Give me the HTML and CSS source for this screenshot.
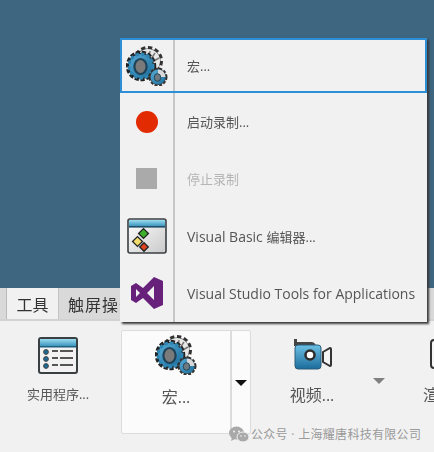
FILE: index.html
```html
<!DOCTYPE html>
<html lang="zh">
<head>
  <meta charset="UTF-8">
  <title>工具</title>
  <link rel="stylesheet" href="styles.css">
</head>
<body>
  <svg class="defs" width="0" height="0">
    <defs>
      <linearGradient id="blueGear" x1="0" y1="0" x2="1" y2="1">
        <stop offset="0" stop-color="#58aed8"/>
        <stop offset="1" stop-color="#1a6a98"/>
      </linearGradient>
      <linearGradient id="winBar" x1="0" y1="0" x2="0" y2="1">
        <stop offset="0" stop-color="#9bdcf0"/>
        <stop offset="1" stop-color="#2f8bb5"/>
      </linearGradient>
      <linearGradient id="camBody" x1="0" y1="0" x2="0" y2="1">
        <stop offset="0" stop-color="#6cc0e4"/>
        <stop offset="1" stop-color="#1c6c9c"/>
      </linearGradient>
      <linearGradient id="paper" x1="0" y1="0" x2="1" y2="1">
        <stop offset="0" stop-color="#ffffff"/>
        <stop offset="1" stop-color="#c9c9c9"/>
      </linearGradient>
      <symbol id="gears" viewBox="0 0 42 40">
        <!-- white gear behind -->
        <circle cx="22" cy="15" r="12.500" fill="#444" stroke="#333" stroke-width="5" stroke-dasharray="4 2.500"/>
        <circle cx="22" cy="15" r="12" fill="#e8e8e8"/>
        <path d="M24 5l-1 7M29 7l-4 6M33 12l-7 4" stroke="#777" stroke-width="1.500"/>
        <!-- big blue gear -->
        <circle cx="15" cy="20" r="13" fill="#222" stroke="#222" stroke-width="4.500" stroke-dasharray="4 1.600"/>
        <circle cx="15" cy="20" r="12" fill="url(#blueGear)" stroke="#2f86b4" stroke-width="3" stroke-dasharray="3.600 2"/>
        <ellipse cx="14.500" cy="20.500" rx="7.200" ry="8.600" fill="#1e4258"/>
        <ellipse cx="14.500" cy="20.500" rx="5" ry="6.400" fill="#7a7a7a"/>
        <!-- small gear -->
        <circle cx="32" cy="31" r="8" fill="#333" stroke="#333" stroke-width="3" stroke-dasharray="2.800 1.500"/>
        <circle cx="32" cy="31" r="7.500" fill="url(#blueGear)"/>
        <path d="M32 31V23.500A7.500 7.500 0 0 1 39.500 31Z" fill="#d8d8d8"/>
        <ellipse cx="31.500" cy="31.500" rx="3.200" ry="3.800" fill="#6f7a80" stroke="#24485c"/>
      </symbol>
    </defs>
  </svg>

  <div class="desktop"></div>

  <nav class="tabs">
    <span class="tab tab-edge"></span>
    <span class="tab tab-on">工具</span>
    <span class="tab tab-off">触屏操作</span>
  </nav>

  <section class="ribbon">
    <div class="tool tool-util">
      <svg class="tool-icon" width="40" height="37" viewBox="0 0 40 37">
        <rect x="1" y="1" width="38" height="35" rx="2" fill="#f2f2f2" stroke="#3a3f42" stroke-width="2"/>
        <rect x="2" y="2" width="36" height="8" fill="url(#winBar)"/>
        <rect x="2" y="9" width="36" height="1.500" fill="#1f5f80"/>
        <g fill="#1d6a94" stroke="#444"><circle cx="8" cy="15" r="2.400"/><circle cx="8" cy="22" r="2.400"/><circle cx="8" cy="29" r="2.400"/></g>
        <g stroke="#555" stroke-width="2"><path d="M14 14h6M22 14h13M14 21h6M22 21h13M14 28h6M22 28h13"/></g>
      </svg>
      <span class="tool-label">实用程序...</span>
    </div>

    <div class="split">
      <div class="split-main">
        <svg class="split-icon" width="42" height="40"><use href="#gears"/></svg>
        <span class="split-label">宏...</span>
      </div>
      <div class="split-drop"><span class="caret"></span></div>
    </div>

    <div class="tool tool-video">
      <svg class="tool-icon" width="40" height="32" viewBox="0 0 40 32">
        <path d="M2 1h3v3h14q4 0 5 4H2z" fill="#444"/>
        <rect x="3" y="7" width="26" height="24" rx="3" fill="url(#camBody)" stroke="#2b5a78"/>
        <circle cx="18" cy="17" r="4.500" fill="#fff" stroke="#2c2c2c" stroke-width="2.500"/>
        <path d="M31 14l7-4q1 0 1 1v16q0 1-1 1l-7-4z" fill="#f4f4f4" stroke="#333" stroke-width="2"/>
      </svg>
      <span class="tool-label tool-label-big">视频...</span>
    </div>
    <span class="caret caret-gray"></span>

    <div class="tool tool-cut">
      <svg class="tool-icon" width="20" height="32" viewBox="0 0 20 32">
        <path d="M5 2h15v28H5q-3 0-3-3V5q0-3 3-3z" fill="#f5f5f5" stroke="#333" stroke-width="2"/>
      </svg>
      <span class="tool-label tool-label-big">渲</span>
    </div>
  </section>

  <footer class="mark">
    <svg width="20" height="17" viewBox="0 0 20 17">
      <ellipse cx="7.500" cy="7" rx="7.500" ry="6.400" fill="#a9a9a9"/>
      <path d="M3 11l-1 4 4-2z" fill="#a9a9a9"/>
      <ellipse cx="14" cy="11" rx="6" ry="5" fill="#a9a9a9" stroke="#f1f1f1"/>
      <g fill="#f1f1f1"><circle cx="5" cy="5.500" r="1"/><circle cx="10" cy="5.500" r="1"/><circle cx="12" cy="10" r=".8"/><circle cx="16" cy="10" r=".8"/></g>
    </svg>
    <span>公众号 · 上海耀唐科技有限公司</span>
  </footer>

  <ul class="menu">
    <li class="menu-row menu-row-on">
      <span class="menu-icon"><svg width="42" height="40"><use href="#gears"/></svg></span>
      <span class="menu-text">宏...</span>
    </li>
    <li class="menu-row">
      <span class="menu-icon"><span class="rec"></span></span>
      <span class="menu-text">启动录制...</span>
    </li>
    <li class="menu-row">
      <span class="menu-icon"><span class="stop"></span></span>
      <span class="menu-text menu-text-off">停止录制</span>
    </li>
    <li class="menu-row">
      <span class="menu-icon">
        <svg width="40" height="36" viewBox="0 0 40 36">
          <rect x="1" y="1" width="38" height="34" rx="2" fill="url(#paper)" stroke="#3a3f42" stroke-width="1.600"/>
          <rect x="2" y="2" width="36" height="7" fill="url(#winBar)"/>
          <rect x="2" y="8" width="36" height="1.600" fill="#1f4f6a"/>
          <rect x="13" y="12" width="7" height="7" transform="rotate(45 16.500 15.500)" fill="#3fae2a" stroke="#222" stroke-width="1.300"/>
          <rect x="7" y="20" width="7" height="7" transform="rotate(45 10.500 23.500)" fill="#f3dc6c" stroke="#222" stroke-width="1.300"/>
          <rect x="14" y="26" width="6" height="6" transform="rotate(45 17 29)" fill="#e2441f" stroke="#222" stroke-width="1.300"/>
        </svg>
      </span>
      <span class="menu-text menu-text-en">Visual Basic <span class="menu-text-cn">编辑器...</span></span>
    </li>
    <li class="menu-row">
      <span class="menu-icon">
        <svg width="34" height="34" viewBox="0 0 34 34">
          <path fill-rule="evenodd" fill="#68217a" d="M24 1l9 4v24l-9 4-11-11-7 5-5-3V10l5-3 7 5zM24 10l-7 7 7 7zM6 13v8l4-4z"/>
        </svg>
      </span>
      <span class="menu-text menu-text-en">Visual Studio Tools for Applications</span>
    </li>
  </ul>
</body>
</html>
```

FILE: styles.css
```css
* { margin: 0; padding: 0; box-sizing: border-box; }
html, body { height: 100%; }
body {
  width: 434px;
  height: 452px;
  overflow: hidden;
  display: flex;
  flex-direction: column;
  position: relative;
  background: #f1f1f1;
  font-family: "Open Sans", "Noto Sans CJK SC", sans-serif;
  color: #444;
}
.defs { position: absolute; }
.tool-label, .split-label, .menu-text, .tab, .tool-icon, .split-icon, .menu-icon svg { filter: blur(0.5px); }

.desktop { height: 288px; background: #3e6680; flex: none; }

/* tabs */
.tabs {
  height: 33px;
  flex: none;
  display: flex;
  background: #d9d9d9;
  border-bottom: 2px solid #d2d2d2;
  font-size: 16px;
  color: #333;
  overflow: hidden;
}
.tab { display: flex; align-items: center; justify-content: center; white-space: nowrap; }
.tab-edge { width: 7px; border-right: 1px solid #bbb; }
.tab-on { width: 52px; background: #f1f1f1; border-right: 1px solid #c4c4c4; }
.tab-off { padding-left: 9px; justify-content: flex-start; letter-spacing: 1px; }

/* ribbon */
.ribbon { flex: 1; display: flex; align-items: flex-start; min-height: 0; overflow: hidden; }
.tool { display: flex; flex-direction: column; align-items: center; flex: none; }
.tool-label { font-size: 13px; color: #555; white-space: nowrap; }
.tool-label-big { font-size: 16px; }
.tool-util { width: 116px; padding: 16px 0 0 0; margin-right: 5px; }
.tool-util .tool-label { margin-top: 10px; }
.tool-video { width: 46px; margin-left: 38px; padding-top: 17px; }
.tool-video .tool-label { margin-top: 12px; }
.tool-cut { width: 11px; margin-left: 38px; padding-top: 17px; overflow: hidden; }
.tool-cut .tool-label { margin-top: 12px; align-self: flex-start; }
.tool-cut .tool-icon { align-self: flex-start; margin-left: 6px; }

.split {
  width: 130px;
  height: 104px;
  margin-top: 9px;
  display: flex;
  background: #fbfbfb;
  border: 1px solid #dcdcdc;
  border-radius: 2px;
  flex: none;
}
.split-main {
  width: 110px;
  border-right: 2px solid #dcdcdc;
  display: flex;
  flex-direction: column;
  align-items: center;
  padding-top: 4px;
}
.split-label { font-size: 16px; margin-top: 9px; color: #555; }
.split-drop { flex: 1; display: flex; justify-content: center; padding-top: 49px; }

.caret {
  width: 0;
  height: 0;
  border-left: 6px solid transparent;
  border-right: 6px solid transparent;
  border-top: 6px solid #111;
}
.caret-gray { border-top-color: #808080; margin: 57px 0 0 38px; flex: none; }

/* watermark */
.mark {
  position: absolute;
  left: 229px;
  top: 425px;
  display: flex;
  align-items: center;
  gap: 2px;
  font-size: 12px;
  letter-spacing: 0.3px;
  color: #9a9a9a;
  white-space: nowrap;
}

/* popup menu */
.menu {
  position: absolute;
  left: 120px;
  top: 38px;
  width: 307px;
  height: 284px;
  list-style: none;
  background: #f1f1f1;
  box-shadow: 2px 2px 2px #3a3a3a;
  display: flex;
  flex-direction: column;
}
.menu-row { flex: 1; display: flex; align-items: center; min-height: 0; }
.menu-row-on { outline: 2px solid #2f8fd6; outline-offset: -2px; flex: none; height: 55px; }
.menu-icon {
  width: 55px;
  height: 100%;
  flex: none;
  display: flex;
  align-items: center;
  justify-content: center;
  border-right: 2px solid #c6c6c6;
}
.menu-text { margin-left: 12px; font-size: 13px; color: #555; white-space: nowrap; }
.menu-text-en { font-size: 14px; }
.menu-text-cn { font-size: 13px; }
.menu-text-off { color: #b5b5b5; }
.rec { width: 22px; height: 22px; border-radius: 50%; background: #e32b00; }
.stop { width: 21px; height: 21px; background: #aaa; }
```
